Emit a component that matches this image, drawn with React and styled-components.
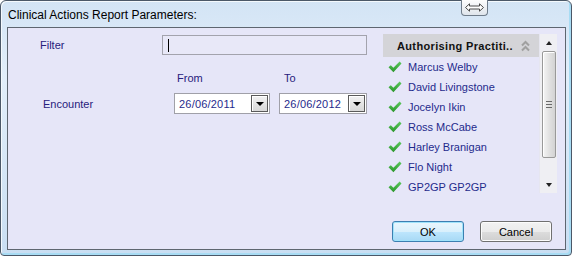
import React from 'react';
import styled, { createGlobalStyle } from 'styled-components';

const GlobalStyle = createGlobalStyle`
    html, body {
        margin: 0;
        padding: 0;
        background: #ffffff;
    }
    body {
        font-family: "Liberation Sans", Arial, sans-serif;
        font-size: 11px;
    }
`

const Window = styled.div`
    box-sizing: border-box;
    width: 572px;
    height: 256px;
    border: 1px solid #4b5868;
    border-radius: 6px 6px 4px 4px;
    background: linear-gradient(to bottom, #d3e4f5 0%, #e2eefa 30%, #c9def2 100%);
    display: flex;
    flex-direction: column;
    padding: 0 5px 5px 6px;
    box-shadow: inset 1px 1px 0 #f4f9fd, inset -2px -2px 0 #a8dcf4;
`

const TitleBar = styled.div`
    position: relative;
    height: 26px;
    display: flex;
    align-items: center;
    padding: 2px 0 0 1px;
    box-sizing: border-box;
    font-size: 12px;
    color: #000;
`

const SplitTab = styled.div`
    position: absolute;
    top: -1px;
    left: 454px;
    width: 27px;
    height: 16px;
    box-sizing: border-box;
    border: 1px solid #6f7c8a;
    border-top: none;
    border-radius: 0 0 4px 4px;
    background: linear-gradient(to bottom, #fdfdfd, #dfe5ec);
    display: flex;
    align-items: center;
    justify-content: center;
`

const Client = styled.div`
    flex: 1;
    border: 1px solid #5e6670;
    background: #e6e6f8;
    display: grid;
    grid-template-columns: 1fr 173px;
    padding: 6px 8px 0 0;
    color: #27207c;
`

const FormArea = styled.div`
    display: flex;
    flex-direction: column;
    padding-left: 32px;
`

const FilterRow = styled.div`
    display: flex;
    align-items: center;
    height: 20px;
    margin-top: 1px;
`

const Label = styled.div`
    width: ${p => p.$w}px;
    margin-left: ${p => p.$indent || 0}px;
    line-height: 20px;
`

const FilterInput = styled.div`
    box-sizing: border-box;
    width: 205px;
    height: 20px;
    border: 1px solid #a3a3ad;
    background: #e8e8f8;
    display: flex;
    align-items: center;
    padding-left: 5px;
`

const Caret = styled.span`
    width: 1px;
    height: 13px;
    background: #000;
`

const DateRow = styled.div`
    display: flex;
    align-items: flex-end;
    margin-top: 16px;
`

const DateGroup = styled.div`
    display: flex;
    gap: 9px;
`

const DateCol = styled.div`
    display: flex;
    flex-direction: column;
    gap: 8px;
`

const ColLabel = styled.div`
    line-height: 14px;
    padding-left: ${p => p.$pad}px;
`

const DateBox = styled.div`
    box-sizing: border-box;
    width: ${p => p.$w}px;
    height: 21px;
    border: 1px solid #a0a0a8;
    background: #fff;
    display: flex;
    align-items: center;
    justify-content: space-between;
    padding: 0 1px 0 4px;
    color: #1f2a8c;
    letter-spacing: 0.2px;
`

const DropButton = styled.div`
    box-sizing: border-box;
    width: 17px;
    height: 17px;
    border: 1px solid #5a5a5a;
    background: linear-gradient(to bottom, #f2f2f2, #d8d8d8);
    box-shadow: inset 1px 1px 0 #ffffff;
    display: flex;
    align-items: center;
    justify-content: center;
`

const DownArrow = styled.span`
    width: 0;
    height: 0;
    border-left: 4px solid transparent;
    border-right: 4px solid transparent;
    border-top: 4px solid #000;
`

const SideArea = styled.div`
    display: flex;
    flex-direction: column;
`

const ListBox = styled.div`
    display: flex;
    height: 159px;
    margin-left: -1px;
`

const ListMain = styled.div`
    width: 157px;
    overflow: hidden;
`

const ListHeader = styled.div`
    height: 23px;
    background: #d4d4d8;
    display: flex;
    align-items: center;
    justify-content: space-between;
    padding: 0 9px 0 14px;
    font-weight: bold;
    letter-spacing: 0.35px;
    color: #111;
`

const ListItem = styled.div`
    height: 20px;
    display: flex;
    align-items: center;
    padding-left: 5px;
    gap: 6px;
    color: #1f2a8c;
    &:first-of-type {
        margin-top: 1px;
    }
`

const ScrollBar = styled.div`
    width: 17px;
    background: #efeff3;
    display: flex;
    flex-direction: column;
    align-items: center;
    border-left: 1px solid #e6e6f0;
`

const ScrollArrow = styled.div`
    height: 17px;
    width: 100%;
    display: flex;
    align-items: center;
    justify-content: center;
`

const UpTri = styled.span`
    width: 0;
    height: 0;
    border-left: 3.5px solid transparent;
    border-right: 3.5px solid transparent;
    border-bottom: 4px solid #222;
`

const DownTri = styled(UpTri)`
    border-bottom: none;
    border-top: 4px solid #222;
`

const Thumb = styled.div`
    box-sizing: border-box;
    width: 14px;
    height: 107px;
    border: 1px solid #999;
    border-radius: 2px;
    background: linear-gradient(to right, #f5f5f5, #e2e2e2 50%, #d3d3d3);
    box-shadow: inset 1px 1px 0 #fff;
    display: flex;
    flex-direction: column;
    align-items: center;
    justify-content: center;
    gap: 2px;
`

const Grip = styled.span`
    width: 6px;
    height: 1px;
    background: #6a6a6a;
`

const ScrollTrack = styled.div`
    flex: 1;
    display: flex;
    flex-direction: column;
    align-items: center;
`

const ButtonRow = styled.div`
    display: flex;
    justify-content: flex-end;
    gap: 16px;
    margin-top: 28px;
    padding-right: 5px;
`

const Button = styled.button`
    box-sizing: border-box;
    width: 72px;
    height: 21px;
    font-family: "Liberation Sans", Arial, sans-serif;
    font-size: 11px;
    color: #000;
    border-radius: 3px;
    padding: 0;
    border: 1px solid ${p => p.$default ? '#3c7fb1' : '#707070'};
    background: ${p => p.$default
        ? 'linear-gradient(to bottom, #eaf6fd 0%, #d9f0fc 50%, #bee6fd 51%, #a7d9f5 100%)'
        : 'linear-gradient(to bottom, #f2f2f2 0%, #ebebeb 50%, #dddddd 51%, #cfcfcf 100%)'};
    box-shadow: inset 0 0 0 1px ${p => p.$default ? '#9fe3fb' : '#fcfcfc'};
`

const CheckIcon = () => (
    <svg width="14" height="12" viewBox="0 0 14 12">
        <defs>
            <linearGradient id="chk" x1="0" y1="0" x2="0" y2="1">
                <stop offset="0" stopColor="#5cc85c" />
                <stop offset="1" stopColor="#2a962a" />
            </linearGradient>
        </defs>
        <polygon points="0.5,6.2 2.8,4.2 5.4,6.8 11.6,0.6 13.5,2.6 5.4,11.2" fill="url(#chk)" />
    </svg>
)

const ChevronsUp = () => (
    <svg width="9" height="12" viewBox="0 0 9 12">
        <path d="M1 5.5 L4.5 2 L8 5.5 M1 10.5 L4.5 7 L8 10.5" stroke="#a0a0a0" strokeWidth="2" fill="none" />
    </svg>
)

const SwapArrow = () => (
    <svg width="19" height="9" viewBox="0 0 19 9">
        <path d="M0.5 4.5 L4.5 0.8 L4.5 3 L14.5 3 L14.5 0.8 L18.5 4.5 L14.5 8.2 L14.5 6 L4.5 6 L4.5 8.2 Z"
            fill="#fff" stroke="#4a4a4a" strokeWidth="1" strokeLinejoin="round" />
    </svg>
)

const practitioners = [
    'Marcus Welby',
    'David Livingstone',
    'Jocelyn Ikin',
    'Ross McCabe',
    'Harley Branigan',
    'Flo Night',
    'GP2GP GP2GP'
]

export default function App() {
    return (
        <>
            <GlobalStyle />
            <Window>
                <TitleBar>
                    Clinical Actions Report Parameters:
                    <SplitTab><SwapArrow /></SplitTab>
                </TitleBar>
                <Client>
                    <FormArea>
                        <FilterRow>
                            <Label $w={122}>Filter</Label>
                            <FilterInput><Caret /></FilterInput>
                        </FilterRow>
                        <DateRow>
                            <Label $w={131} $indent={3}>Encounter</Label>
                            <DateGroup>
                                <DateCol>
                                    <ColLabel $pad={3}>From</ColLabel>
                                    <DateBox $w={96}>
                                        26/06/2011
                                        <DropButton><DownArrow /></DropButton>
                                    </DateBox>
                                </DateCol>
                                <DateCol>
                                    <ColLabel $pad={5}>To</ColLabel>
                                    <DateBox $w={88}>
                                        26/06/2012
                                        <DropButton><DownArrow /></DropButton>
                                    </DateBox>
                                </DateCol>
                            </DateGroup>
                        </DateRow>
                    </FormArea>
                    <SideArea>
                        <ListBox>
                            <ListMain>
                                <ListHeader>
                                    Authorising Practiti..
                                    <ChevronsUp />
                                </ListHeader>
                                {practitioners.map(name => (
                                    <ListItem key={name}>
                                        <CheckIcon />
                                        {name}
                                    </ListItem>
                                ))}
                            </ListMain>
                            <ScrollBar>
                                <ScrollArrow><UpTri /></ScrollArrow>
                                <ScrollTrack>
                                    <Thumb><Grip /><Grip /><Grip /></Thumb>
                                </ScrollTrack>
                                <ScrollArrow><DownTri /></ScrollArrow>
                            </ScrollBar>
                        </ListBox>
                        <ButtonRow>
                            <Button $default>OK</Button>
                            <Button>Cancel</Button>
                        </ButtonRow>
                    </SideArea>
                </Client>
            </Window>
        </>
    );
}
